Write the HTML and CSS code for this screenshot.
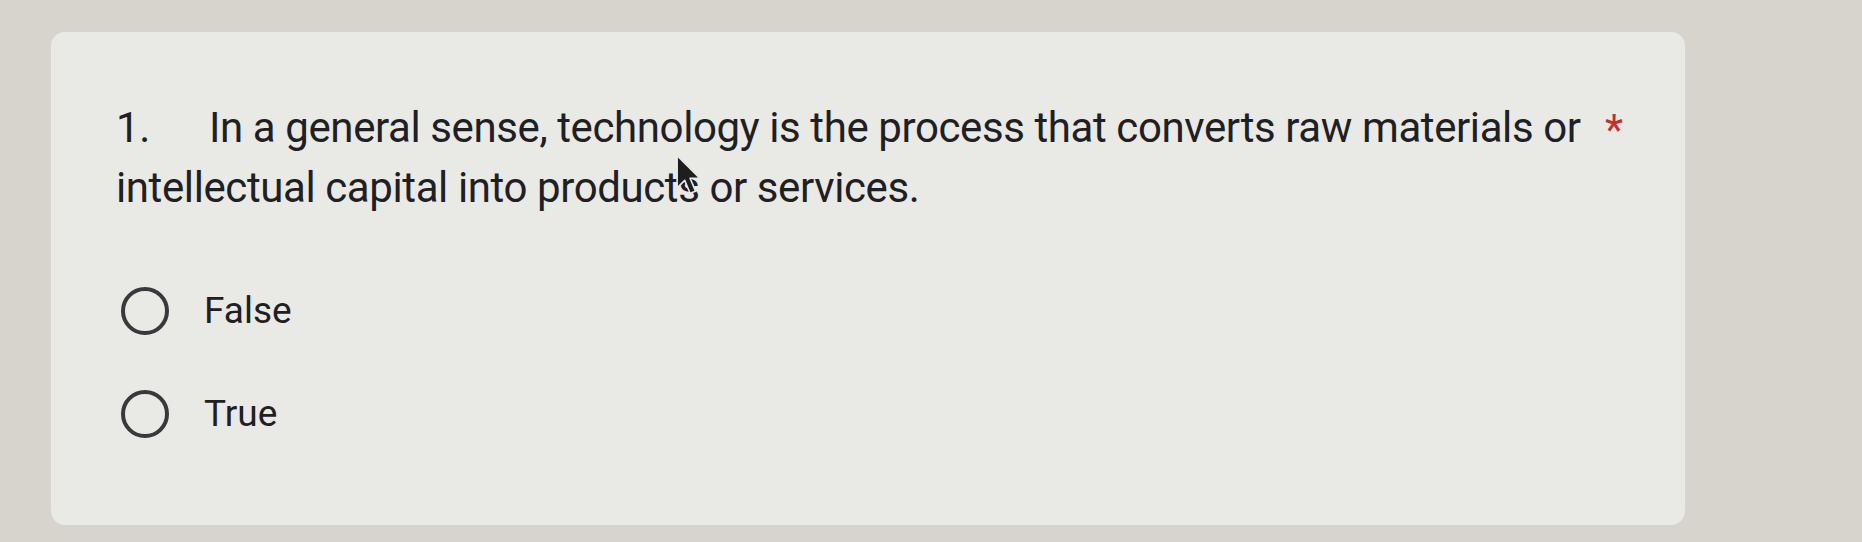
FILE: index.html
```html
<!DOCTYPE html>
<html lang="en">
<head>
<meta charset="utf-8">
<title>Question 1</title>
<link rel="stylesheet" href="styles.css">
</head>
<body>
<div class="page">
  <div class="card">
    <div class="question">
      <div class="question-text"><span class="num">1.</span><span class="qbody">In a general sense, technology is the process that converts raw materials or intellectual capital into products or services.</span></div>
      <span class="required">*</span>
    </div>
    <div class="options">
      <label class="option"><span class="radio"></span><span class="label">False</span></label>
      <label class="option"><span class="radio"></span><span class="label">True</span></label>
    </div>
  </div>
  <svg class="cursor" width="28" height="44" viewBox="0 0 26 40" aria-hidden="true">
    <path d="M2 2 L2 32 L9 25 L14 37 L19 35 L14 23 L23 23 Z" fill="#1e1e1e" stroke="#e8e8e8" stroke-width="1.5" stroke-linejoin="round"/>
  </svg>
</div>
</body>
</html>
```

FILE: styles.css
```css
html, body {
  margin: 0;
  padding: 0;
}
body {
  background: #d7d4ce;
  width: 1862px;
  height: 542px;
  overflow: hidden;
  font-family: Roboto, "Liberation Sans", Arial, sans-serif;
}
.page {
  position: relative;
  padding: 32px 0 0 51px;
}
.card {
  box-sizing: border-box;
  width: 1634px;
  height: 493px;
  background: #e9e9e6;
  border-radius: 14px;
  padding: 66px 62px 0 65px;
}
.question {
  display: flex;
  align-items: flex-start;
}
.question-text {
  flex: 1;
  font-size: 42px;
  line-height: 60px;
  letter-spacing: -0.4px;
  color: #1f2023;
  padding-right: 20px;
}
.num {
  display: inline-block;
  width: 93px;
}
.required {
  color: #c3302a;
  font-size: 42px;
  line-height: 60px;
  padding-top: 2px;
}
.options {
  margin-top: 69px;
  padding-left: 5px;
  display: flex;
  flex-direction: column;
  gap: 55px;
}
.option {
  display: flex;
  align-items: center;
  gap: 35px;
  height: 48px;
}
.radio {
  box-sizing: border-box;
  width: 48px;
  height: 48px;
  border: 4px solid #38393b;
  border-radius: 50%;
}
.label {
  font-size: 37px;
  line-height: 48px;
  color: #1f2023;
}
.cursor {
  position: absolute;
  left: 675px;
  top: 153px;
}
```
